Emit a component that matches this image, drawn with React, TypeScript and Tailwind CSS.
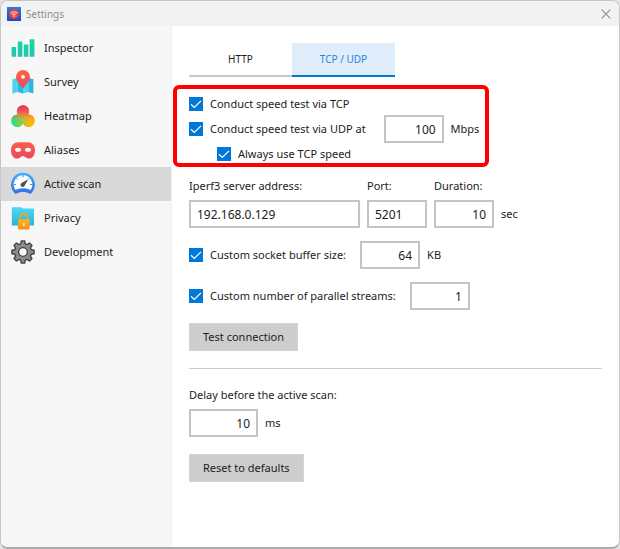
import React, { useState } from 'react';

const InspectorIcon = () => (
  <svg viewBox="0 0 24 24" className="w-6 h-6" aria-hidden="true">
    <defs>
      <linearGradient id="bars" x1="0" y1="0" x2="0" y2="24" gradientUnits="userSpaceOnUse">
        <stop offset="0" stopColor="#12dc9c" />
        <stop offset="1" stopColor="#25c0b2" />
      </linearGradient>
    </defs>
    <g fill="url(#bars)">
      <rect x="0.6" y="11" width="4.500" height="9.800" rx="0.4" />
      <rect x="6.800" y="5.600" width="4.600" height="15.200" rx="0.4" />
      <rect x="12.800" y="8.400" width="4.500" height="12.400" rx="0.4" />
      <rect x="18.600" y="3.200" width="4.800" height="17.600" rx="0.4" />
    </g>
  </svg>
);

const SurveyIcon = () => (
  <svg viewBox="0 0 24 24" className="w-6 h-6" aria-hidden="true">
    <defs>
      <linearGradient id="pin" x1="0" y1="0" x2="0" y2="1">
        <stop offset="0" stopColor="#fb6544" />
        <stop offset="1" stopColor="#ec4560" />
      </linearGradient>
    </defs>
    <path d="M1.4 9.2 6.8 8v14L1.4 23.8Z" fill="#4cd4ef" />
    <path d="M6.8 8 12 9.2v14.2L6.8 22Z" fill="#2fb4dd" />
    <path d="M12 9.2 17.3 8v14L12 23.4Z" fill="#4cd4ef" />
    <path d="M17.3 8 22.4 9.2v14.4L17.3 22Z" fill="#2fb4dd" />
    <path d="M12 18.600C9.200 13.800 5 11.600 5 7a7 6.900 0 0 1 14 0C19 11.600 14.800 13.800 12 18.600Z" fill="url(#pin)" />
    <circle cx="12" cy="6.800" r="1.900" fill="#fff" />
  </svg>
);

const HeatmapIcon = () => (
  <svg viewBox="0 0 24 24" className="w-6 h-6" aria-hidden="true">
    <defs>
      <clipPath id="heatShape">
        <circle cx="12" cy="7.400" r="6.200" />
        <circle cx="6.400" cy="16.800" r="6.300" />
        <circle cx="17.600" cy="16.800" r="6.300" />
        <circle cx="12" cy="13" r="3" />
      </clipPath>
      <linearGradient id="heatBase" x1="1" y1="0" x2="23" y2="0" gradientUnits="userSpaceOnUse">
        <stop offset="0" stopColor="#14e29a" />
        <stop offset="0.5" stopColor="#a9c63c" />
        <stop offset="0.8" stopColor="#fbb70a" />
      </linearGradient>
      <linearGradient id="heatTop" x1="0" y1="0" x2="0" y2="17" gradientUnits="userSpaceOnUse">
        <stop offset="0.1" stopColor="#f5226b" />
        <stop offset="0.5" stopColor="#f2614a" stopOpacity="0.95" />
        <stop offset="1" stopColor="#f08b33" stopOpacity="0" />
      </linearGradient>
    </defs>
    <g clipPath="url(#heatShape)">
      <rect width="24" height="24" fill="url(#heatBase)" />
      <rect width="24" height="17" fill="url(#heatTop)" />
    </g>
  </svg>
);

const AliasesIcon = () => (
  <svg viewBox="0 0 24 24" className="w-6 h-6" aria-hidden="true">
    <defs>
      <linearGradient id="mask" x1="0" y1="0" x2="0" y2="1">
        <stop offset="0" stopColor="#fb5f48" />
        <stop offset="1" stopColor="#ed4862" />
      </linearGradient>
    </defs>
    <path d="M7 4.300C3 4.300 0 7.500 0 12.200c0 5 2.600 8.300 6 8.300 3 0 4.200-2.600 6-2.600s3 2.600 6 2.600c3.400 0 6-3.300 6-8.300 0-4.700-3-7.900-7-7.900Z" fill="url(#mask)" />
    <ellipse cx="7" cy="11.8" rx="3" ry="2.1" fill="#f7f7f7" />
    <ellipse cx="17" cy="11.8" rx="3" ry="2.1" fill="#f7f7f7" />
  </svg>
);

const ActiveScanIcon = () => (
  <svg viewBox="0 0 24 24" className="w-6 h-6" aria-hidden="true">
    <defs>
      <linearGradient id="gauge" x1="0" y1="0" x2="0" y2="1">
        <stop offset="0" stopColor="#3fb0f8" />
        <stop offset="1" stopColor="#3b6fe4" />
      </linearGradient>
    </defs>
    <path d="M12 .8a11.800 11.800 0 0 0-8.900 19.600c.8 1 1.400 1.600 2 1.300C7 20.600 9.300 20 12 20s5 .6 6.900 1.700c.6.300 1.200-.3 2-1.300A11.800 11.800 0 0 0 12 .8Z" fill="url(#gauge)" />
    <path d="M12 3.200a9.300 9.300 0 0 0-7.500 14.700C6.800 16.800 9.300 16.300 12 16.300s5.200.5 7.500 1.600A9.300 9.300 0 0 0 12 3.200Z" fill="#fff" />
    <path d="M12 3v2.400M5.400 5.900l1.500 1.500M18.600 5.900l-1.500 1.500M2.800 12.500h2.200M21.200 12.500H19" stroke="#3b98f2" strokeWidth="1" />
    <path d="M17.200 7.300 13.900 13.200a2.200 2.200 0 1 1-2.900-2.500Z" fill="#47525b" />
  </svg>
);

const PrivacyIcon = () => (
  <svg viewBox="0 0 24 24" className="w-6 h-6" aria-hidden="true">
    <defs>
      <linearGradient id="folder" x1="0" y1="0" x2="0" y2="1">
        <stop offset="0" stopColor="#4fd8ee" />
        <stop offset="1" stopColor="#2bb2dc" />
      </linearGradient>
      <linearGradient id="lock" x1="0" y1="0" x2="0" y2="1">
        <stop offset="0" stopColor="#fcb51c" />
        <stop offset="1" stopColor="#f78d1e" />
      </linearGradient>
    </defs>
    <path d="M.8 1.200h9.500l2 1.200H23v17.200H.8Z" fill="url(#folder)" />
    <path d="M9 14v-2.200a3.800 3.800 0 0 1 7.600 0V14" fill="none" stroke="#f5a51d" strokeWidth="1.800" />
    <rect x="6.900" y="13.400" width="11.700" height="10.200" rx="1.500" fill="url(#lock)" />
    <rect x="12" y="16.800" width="1.600" height="3.600" rx="0.800" fill="#fde6b0" />
  </svg>
);

const DevelopmentIcon = () => (
  <svg viewBox="0 0 24 24" className="w-6 h-6" aria-hidden="true">
    <g fill="#8c8c8c" stroke="#444" strokeWidth="1.400" strokeLinejoin="round">
      <path d="M10.300.9h3.400l.6 2.900 1.800.8 2.500-1.600 2.400 2.400-1.600 2.500.8 1.800 2.900.6v3.400l-2.900.6-.8 1.800 1.600 2.500-2.400 2.400-2.500-1.600-1.800.8-.6 2.900h-3.400l-.6-2.900-1.800-.8-2.500 1.600-2.400-2.400 1.600-2.500-.8-1.800-2.900-.6v-3.400l2.900-.6.8-1.800L3 5.400 5.400 3l2.500 1.600 1.800-.8Z" />
      <circle cx="12" cy="12" r="4.400" fill="#f7f7f7" />
    </g>
  </svg>
);

const AppIcon = () => (
  <svg viewBox="0 0 14 14" className="w-[14px] h-[14px]" aria-hidden="true">
    <defs>
      <linearGradient id="appBg" x1="0" y1="0" x2="0" y2="1">
        <stop offset="0" stopColor="#1c83e8" />
        <stop offset="1" stopColor="#2545c8" />
      </linearGradient>
    </defs>
    <rect width="14" height="14" fill="url(#appBg)" />
    <circle cx="7" cy="7" r="4.900" fill="#ee4340" />
    <path d="M3.700 6.200a4.700 4.700 0 0 1 6.600 0M5.200 7.700a2.600 2.600 0 0 1 3.600 0" fill="none" stroke="#fbd3d0" strokeWidth="1.100" />
    <circle cx="7" cy="9" r="0.800" fill="#fff" />
  </svg>
);

const navItems = [
  { title: 'Inspector', icon: <InspectorIcon /> },
  { title: 'Survey', icon: <SurveyIcon /> },
  { title: 'Heatmap', icon: <HeatmapIcon /> },
  { title: 'Aliases', icon: <AliasesIcon /> },
  { title: 'Active scan', icon: <ActiveScanIcon /> },
  { title: 'Privacy', icon: <PrivacyIcon /> },
  { title: 'Development', icon: <DevelopmentIcon /> },
];

const tabs = ['HTTP', 'TCP / UDP'];

const Check = ({ label }: { label: string }) => (
  <label className="flex items-center gap-[7px] h-[18px] whitespace-nowrap">
    <span className="grid shrink-0">
      <input
        type="checkbox"
        defaultChecked
        className="peer appearance-none w-[14px] h-[14px] border border-[#0078d7] bg-white checked:bg-[#0078d7] col-start-1 row-start-1"
      />
      <svg
        viewBox="0 0 14 14"
        className="w-[14px] h-[14px] col-start-1 row-start-1 pointer-events-none invisible peer-checked:visible"
        aria-hidden="true"
      >
        <path d="M2 7.300 5.300 10.500 12 3.800" fill="none" stroke="#fff" strokeWidth="1.200" />
      </svg>
    </span>
    {label}
  </label>
);

const fieldClass = 'h-7 border-2 border-[#c4c4c4] bg-white px-[6px] text-xs outline-none';
const buttonClass = 'h-7 bg-[#cdcdcd] border border-[#d4d4d4] px-[13px] whitespace-nowrap';

const App = () => {
  const [section, setSection] = useState('Active scan');
  const [tab, setTab] = useState('TCP / UDP');

  return (
    <div className="min-h-screen flex bg-[#e4e4e4] text-[11px] leading-4 text-[#1c1c1c] font-['Noto_Sans','Open_Sans',sans-serif]">
      <div className="flex-1 flex flex-col rounded-lg border border-b-2 border-[#c6c6c6] border-b-[#ababab] bg-white overflow-hidden">
        <header className="flex items-center h-[25px] bg-[#f2f2f2] pl-[6px] pr-2 text-[10px] text-[#8c8c8c]">
          <AppIcon />
          <span className="ml-[5px]">Settings</span>
          <button type="button" aria-label="Close" className="ml-auto">
            <svg viewBox="0 0 10 10" className="w-[10px] h-[10px]" aria-hidden="true">
              <path d="M.7.7 9.300 9.300M9.300.7.7 9.300" stroke="#8f8f8f" strokeWidth="1.100" />
            </svg>
          </button>
        </header>

        <div className="flex-1 flex">
          <nav className="w-[171px] shrink-0 bg-[#f7f7f7] border-r border-[#f0f0f0] pt-[5px]">
            {navItems.map((item) => (
              <button
                key={item.title}
                type="button"
                onClick={() => setSection(item.title)}
                className={`flex items-center gap-[9px] w-full h-[34px] pl-[10px] ${section === item.title ? 'bg-[#d9d9d9]' : ''}`}
              >
                {item.icon}
                {item.title}
              </button>
            ))}
          </nav>

          <main className="flex-1 min-w-0 pl-[17px] pr-[17px] pt-[17px] pb-4">
            <div role="tablist" className="flex">
              {tabs.map((name) => (
                <button
                  key={name}
                  type="button"
                  role="tab"
                  aria-selected={tab === name}
                  onClick={() => setTab(name)}
                  className={`w-[103px] h-[34px] text-[10px] border-b-2 ${
                    tab === name
                      ? 'border-[#0078d7] bg-[#e0edfb] text-[#2487dc]'
                      : 'border-[#c8c8c8]'
                  }`}
                >
                  {name}
                </button>
              ))}
            </div>

            {/* Speed test options */}
            <div className="flex flex-col gap-[2px] w-fit mt-2 -ml-4 border-4 border-[#fe0000] rounded-md pl-3 pr-[6px] pt-[6px]">
              <Check label="Conduct speed test via TCP" />
              <div className="flex items-center">
                <Check label="Conduct speed test via UDP at" />
                <input id="udp" aria-label="UDP speed" defaultValue="100" className={`${fieldClass} w-[60px] text-right ml-[18px]`} />
                <label htmlFor="udp" className="ml-[7px]">Mbps</label>
              </div>
              <div className="pl-7">
                <Check label="Always use TCP speed" />
              </div>
            </div>

            <div className="flex items-end gap-[7px] mt-[10px]">
              <div className="flex flex-col gap-[5px]">
                <label htmlFor="server" className="leading-[18px]">Iperf3 server address:</label>
                <input id="server" defaultValue="192.168.0.129" className={`${fieldClass} w-[171px]`} />
              </div>
              <div className="flex flex-col gap-[5px]">
                <label htmlFor="port" className="leading-[18px]">Port:</label>
                <input id="port" defaultValue="5201" className={`${fieldClass} w-[60px]`} />
              </div>
              <div className="flex flex-col gap-[5px]">
                <label htmlFor="duration" className="leading-[18px]">Duration:</label>
                <input id="duration" defaultValue="10" className={`${fieldClass} w-[60px] text-right`} />
              </div>
              <span className="leading-7">sec</span>
            </div>

            <div className="flex items-center mt-[13px]">
              <Check label="Custom socket buffer size:" />
              <input id="buffer" aria-label="Socket buffer size" defaultValue="64" className={`${fieldClass} w-[60px] text-right ml-[14px]`} />
              <label htmlFor="buffer" className="ml-[7px]">KB</label>
            </div>

            <div className="flex items-center mt-[13px]">
              <Check label="Custom number of parallel streams:" />
              <input aria-label="Parallel streams" defaultValue="1" className={`${fieldClass} w-[60px] text-right ml-[14px]`} />
            </div>

            <button type="button" className={`${buttonClass} mt-[13px]`}>Test connection</button>

            <hr className="mt-[17px] border-[#cdcdcd]" />

            <label htmlFor="delay" className="block leading-[18px] mt-[17px]">Delay before the active scan:</label>
            <div className="flex items-center mt-[5px]">
              <input id="delay" defaultValue="10" className={`${fieldClass} w-[69px] text-right`} />
              <span className="ml-[7px]">ms</span>
            </div>

            <button type="button" className={`${buttonClass} mt-[17px]`}>Reset to defaults</button>
          </main>
        </div>
      </div>
    </div>
  );
};

export default App;
